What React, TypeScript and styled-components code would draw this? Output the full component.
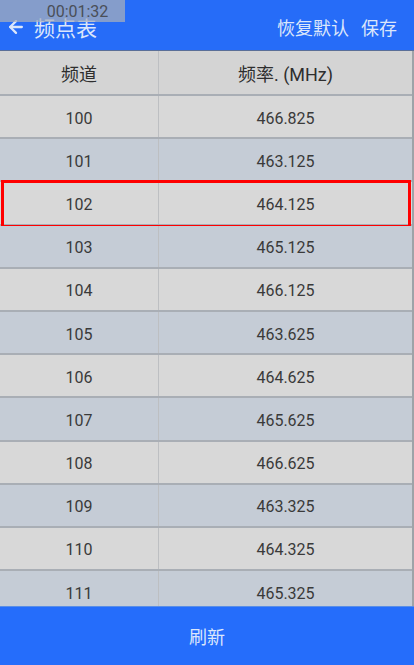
import React from "react";
import styled, { createGlobalStyle } from "styled-components";
import { ArrowLeft } from "lucide-react";

const GlobalStyle = createGlobalStyle`
  html, body {
    margin: 0;
    padding: 0;
    height: 100%;
    overflow: hidden;
    font-family: Roboto, "Noto Sans CJK SC", sans-serif;
  }
  #root {
    height: 100%;
  }
`;

const Page = styled.div`
  display: flex;
  flex-direction: column;
  height: 665px;
  width: 414px;
  position: relative;
  background: #d8d8d8;
`;

const Header = styled.div`
  height: 51px;
  flex-shrink: 0;
  background: #266cf8;
  border-bottom: 1px solid #5a6f98;
  display: flex;
  align-items: center;
  justify-content: space-between;
  padding: 3px 17px 0 6px;
  box-sizing: border-box;
  color: #dbe6fb;
`;

const TitleWrap = styled.div`
  display: flex;
  align-items: center;
  gap: 8px;
  font-size: 21px;
  font-family: "Noto Sans CJK SC", sans-serif;
`;

const Actions = styled.div`
  display: flex;
  gap: 12px;
  font-size: 18px;
  font-family: "Noto Sans CJK SC", sans-serif;
`;

const Clock = styled.div`
  position: absolute;
  left: 0;
  top: 0;
  width: 125px;
  height: 22px;
  background: rgba(170, 176, 186, 0.72);
  color: #4a4f58;
  font-size: 16px;
  display: flex;
  align-items: center;
  justify-content: center;
  padding-left: 30px;
  box-sizing: border-box;
`;

const Table = styled.div`
  flex: 1;
  overflow: hidden;
  border-right: 2px solid #9ea3a8;
`;

const Row = styled.div<{ $alt?: boolean; $head?: boolean }>`
  display: grid;
  grid-template-columns: 158px 1fr;
  height: ${(p) => (p.$head ? "45px" : "43.2px")};
  box-sizing: border-box;
  background: ${(p) => (p.$head ? "#d4d4d4" : p.$alt ? "#c5ccd6" : "#d8d8d8")};
  border-bottom: 2px solid #a9aeb5;
  position: relative;
  color: ${(p) => (p.$head ? "#2e2e2e" : "#3a3a3a")};
  font-size: ${(p) => (p.$head ? "18px" : "16px")};
`;

const Cell = styled.div<{ $cjk?: boolean; $head?: boolean }>`
  display: flex;
  align-items: center;
  justify-content: center;
  padding-top: ${(p) => (p.$head ? "0" : "3px")};
  font-family: ${(p) => (p.$cjk ? '"Noto Sans CJK SC", sans-serif' : 'Roboto, "Noto Sans CJK SC", sans-serif')};
  & + & {
    border-left: 1px solid #bdbfc2;
  }
`;

const Highlight = styled.div`
  position: absolute;
  left: 1px;
  right: 1px;
  top: -2px;
  bottom: -4px;
  border: 3px solid #ff0000;
  pointer-events: none;
`;

const Refresh = styled.div`
  height: 58px;
  flex-shrink: 0;
  background: #256dfb;
  color: #dbe6fb;
  font-size: 18px;
  font-family: "Noto Sans CJK SC", sans-serif;
  display: flex;
  align-items: center;
  justify-content: center;
  border-top: 1px solid #5a8ee6;
`;

const rows = [
  ["100", "466.825"],
  ["101", "463.125"],
  ["102", "464.125"],
  ["103", "465.125"],
  ["104", "466.125"],
  ["105", "463.625"],
  ["106", "464.625"],
  ["107", "465.625"],
  ["108", "466.625"],
  ["109", "463.325"],
  ["110", "464.325"],
  ["111", "465.325"],
];

export default function App() {
  return (
    <Page>
      <GlobalStyle />
      <Header>
        <TitleWrap>
          <ArrowLeft size={20} strokeWidth={2.75} />
          <span>频点表</span>
        </TitleWrap>
        <Actions>
          <span>恢复默认</span>
          <span>保存</span>
        </Actions>
      </Header>
      <Clock>00:01:32</Clock>
      <Table>
        <Row $head>
          <Cell $head $cjk>频道</Cell>
          <Cell $head>频率. (MHz)</Cell>
        </Row>
        {rows.map(([ch, f], i) => (
          <Row key={ch} $alt={i % 2 === 1}>
            <Cell>{ch}</Cell>
            <Cell>{f}</Cell>
            {i === 2 && <Highlight />}
          </Row>
        ))}
      </Table>
      <Refresh>刷新</Refresh>
    </Page>
  );
}
